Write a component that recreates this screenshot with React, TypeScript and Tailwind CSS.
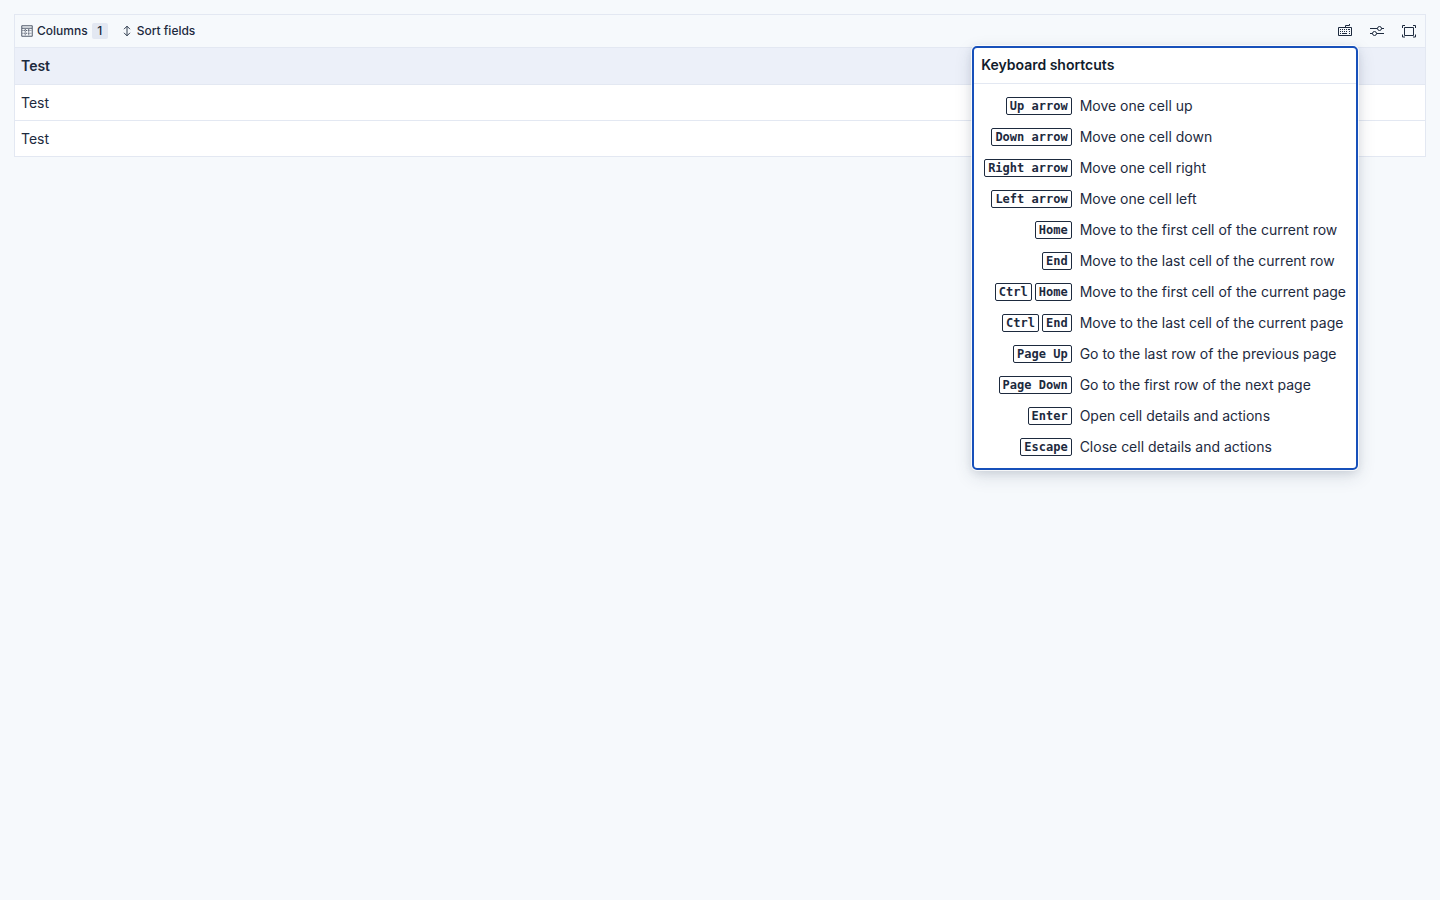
import React, { useState } from "react";

const shortcuts = [
  { keys: ["Up arrow"], text: "Move one cell up" },
  { keys: ["Down arrow"], text: "Move one cell down" },
  { keys: ["Right arrow"], text: "Move one cell right" },
  { keys: ["Left arrow"], text: "Move one cell left" },
  { keys: ["Home"], text: "Move to the first cell of the current row" },
  { keys: ["End"], text: "Move to the last cell of the current row" },
  { keys: ["Ctrl", "Home"], text: "Move to the first cell of the current page" },
  { keys: ["Ctrl", "End"], text: "Move to the last cell of the current page" },
  { keys: ["Page Up"], text: "Go to the last row of the previous page" },
  { keys: ["Page Down"], text: "Go to the first row of the next page" },
  { keys: ["Enter"], text: "Open cell details and actions" },
  { keys: ["Escape"], text: "Close cell details and actions" },
];

const rows = ["Test", "Test"];

function ColumnsIcon() {
  return (
    <svg className="h-3 w-3" viewBox="0 0 12 12" fill="none" stroke="currentColor" aria-hidden="true">
      <path d="M0.75 0.75h10.5v10.5H0.75z" strokeWidth="0.75" />
      <path d="M1 3.25h10" strokeWidth="0.75" />
      <path d="M1.5 5.5h9M1.5 8.25h9M4.25 4v7M7.75 4v7" strokeWidth="0.75" strokeDasharray="1 0.75" />
    </svg>
  );
}

function SortIcon() {
  return (
    <svg className="h-3 w-3" viewBox="0 0 12 12" fill="none" stroke="currentColor" strokeWidth="0.9" aria-hidden="true">
      <path d="M6 1.2v9.6M3 4.2 6 1.2l3 3M3 7.8l3 3 3-3" />
    </svg>
  );
}

function KeyboardIcon() {
  return (
    <svg className="h-4 w-4" viewBox="0 0 16 16" fill="none" stroke="currentColor" aria-hidden="true">
      <path d="M1.5 4.5h13v8h-13z" />
      <path d="M8.5 4V2.5h4V1" />
      <path d="M3 6.5h1M5 6.5h1M7 6.5h1M9 6.5h1M11 6.5h2M3 8.5h1M5 8.5h1M7 8.5h1M9 8.5h1M12 8.5h1M3 10.5h1M5 10.5h5M12 10.5h1" />
    </svg>
  );
}

function ControlsIcon() {
  return (
    <svg className="h-4 w-4" viewBox="0 0 16 16" fill="none" stroke="currentColor" aria-hidden="true">
      <path d="M1 5.5h7.5M12.5 5.5H15M1 10.5h2.5M7.5 10.5H15" />
      <circle cx="10.5" cy="5.5" r="2" />
      <circle cx="5.5" cy="10.5" r="2" />
    </svg>
  );
}

function FullScreenIcon() {
  return (
    <svg className="h-4 w-4" viewBox="0 0 16 16" fill="none" stroke="currentColor" aria-hidden="true">
      <path d="M3.5 4.5h9v8h-9z" />
      <path d="M1.5 5V2.5H4M12 2.5h2.5V5M14.5 11.5v2.5H12M4 14H1.5V11.5" />
    </svg>
  );
}

export default function App() {
  // Keyboard shortcuts popover starts open
  const [isOpen, setIsOpen] = useState(true);

  return (
    <div className="min-h-screen bg-[#f6f9fc] p-3.5 font-['Inter',sans-serif] text-sm text-[#1d2a3e]">
      <div className="border-x border-t border-[#e3e8f2]">
        {/* Toolbar */}
        <div className="flex h-8 items-center justify-between pr-0.5 pl-1.5 text-xs font-medium">
          <div className="flex items-center gap-[13px]">
            <button className="flex items-center gap-1">
              <ColumnsIcon />
              Columns
              <span className="flex h-4 w-4 items-center justify-center rounded-xs bg-[#e3e8f2]">1</span>
            </button>
            <button className="flex items-center gap-1">
              <SortIcon />
              Sort fields
            </button>
          </div>

          <div className="flex items-center gap-1">
            <div className="relative">
              <button
                className="flex h-7 w-7 items-center justify-center"
                aria-label="Keyboard shortcuts"
                aria-expanded={isOpen}
                onClick={() => setIsOpen(!isOpen)}
              >
                <KeyboardIcon />
              </button>

              {/* Shortcuts popover */}
              {isOpen && (
                <div
                  role="dialog"
                  aria-labelledby="shortcuts-title"
                  className="absolute top-full right-px z-10 mt-px w-max rounded-[5px] border-2 border-[#1750ba] bg-white text-sm font-normal shadow-[0_0_0_1px_#fffc,0_2px_8px_#2b394f1f,0_6px_18px_#2b394f26]"
                >
                  <h2 id="shortcuts-title" className="border-b border-[#e3e8f2] px-[7px] pt-1.5 pb-2 leading-[21px] font-semibold text-[#111c2c]">
                    Keyboard shortcuts
                  </h2>
                  <dl className="grid grid-cols-[auto_auto] gap-x-2 gap-y-2.5 px-2.5 py-[11px] leading-[21px]">
                    {shortcuts.map((item) => (
                      <React.Fragment key={item.text}>
                        <dt className="flex items-center justify-end gap-[3px]">
                          {item.keys.map((key) => (
                            <kbd
                              key={key}
                              className="rounded-xs border border-[#1d2a3e] px-[3px] font-['DejaVu_Sans_Mono',monospace] text-xs font-bold"
                            >
                              {key}
                            </kbd>
                          ))}
                        </dt>
                        <dd>{item.text}</dd>
                      </React.Fragment>
                    ))}
                  </dl>
                </div>
              )}
            </div>
            <button className="flex h-7 w-7 items-center justify-center" aria-label="Display options">
              <ControlsIcon />
            </button>
            <button className="flex h-7 w-7 items-center justify-center" aria-label="Full screen">
              <FullScreenIcon />
            </button>
          </div>
        </div>

        {/* Data grid */}
        <table className="w-full border-separate border-spacing-0 text-left">
          <thead>
            <tr>
              <th className="h-[38px] border-y border-[#e3e8f2] bg-[#ecf0f9] px-1.5 font-semibold">Test</th>
            </tr>
          </thead>
          <tbody className="bg-white">
            {rows.map((row, i) => (
              <tr key={i}>
                <td className="h-9 border-b border-[#e3e8f2] px-1.5">{row}</td>
              </tr>
            ))}
          </tbody>
        </table>
      </div>
    </div>
  );
}
